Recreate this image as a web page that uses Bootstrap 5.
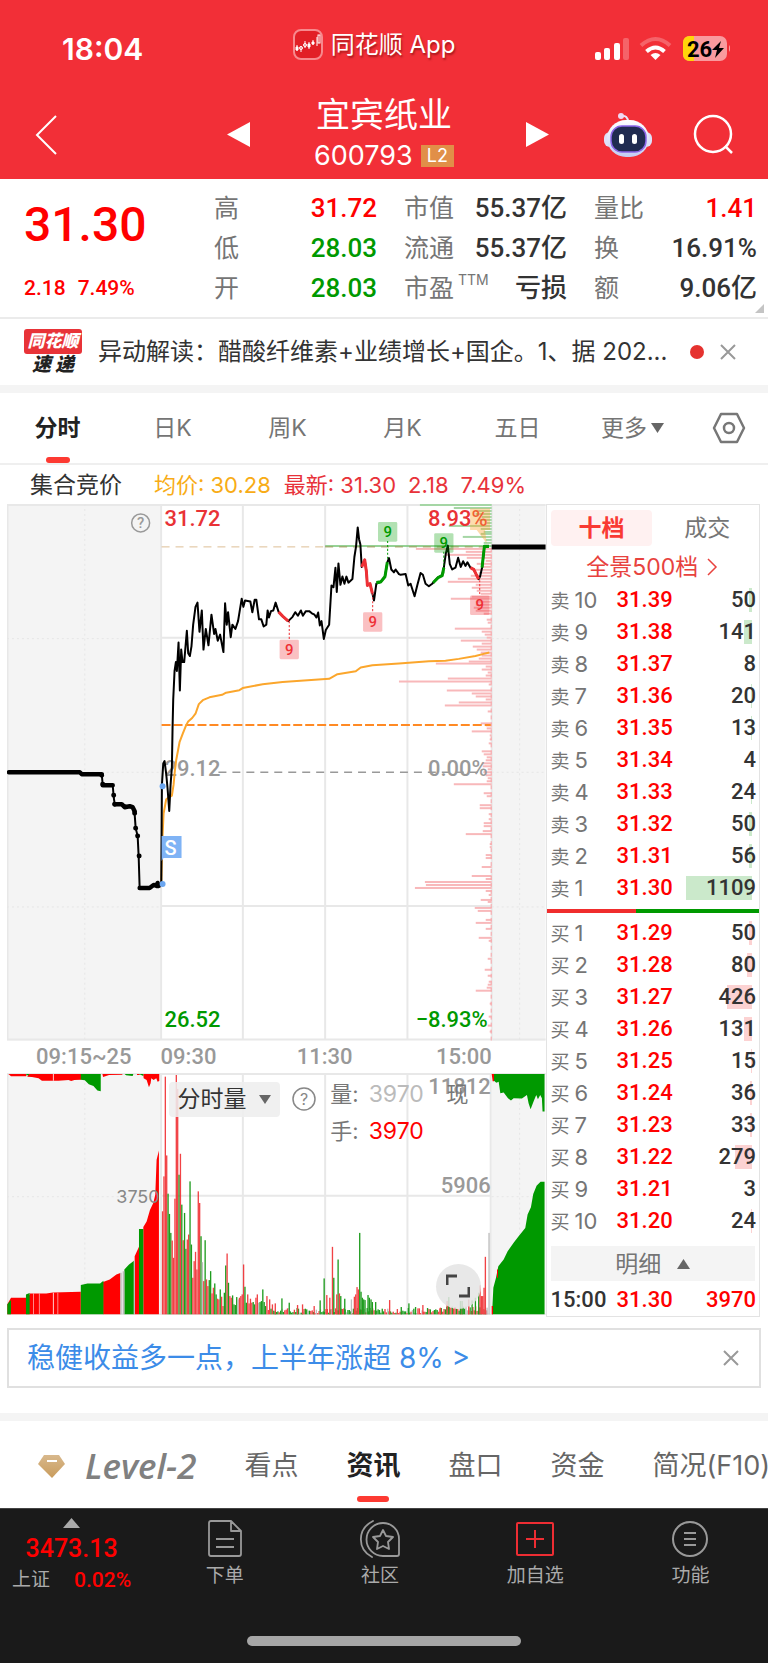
<!DOCTYPE html>
<html lang="zh-CN">
<head>
<meta charset="utf-8">
<meta name="viewport" content="width=device-width, initial-scale=1">
<title>宜宾纸业 600793</title>
<link href="https://cdn.jsdelivr.net/npm/bootstrap@5.3.0/dist/css/bootstrap.min.css" rel="stylesheet">
<style>
  :root { --rise: #ff0000; --fall: #009900; --brand: #f22f37; --line: #ebebeb; --muted: #757575; }
  body { font-family: Inter, "Noto Sans CJK SC", sans-serif; font-size: 24px; line-height: 32px; color: #333; background: #fff; overflow-x: hidden; }
  button { font: inherit; color: inherit; background: none; border: 0; padding: 0; }
  a { color: inherit; text-decoration: none; }
  svg { display: block; flex: none; }
  .din { font-family: Roboto, "Noto Sans CJK SC", sans-serif; font-weight: 500; }
  .rise { color: var(--rise); }
  .fall { color: var(--fall); }
  .muted { color: var(--muted); }

  .top-area { background: var(--brand); color: #fff; }
  .thirds { display: grid; grid-template-columns: 1fr auto 1fr; align-items: center; }
  .status-row { height: 86px; padding: 12px 38px 0 18px; }
  .clock { font-size: 30px; font-weight: 600; line-height: 40px; padding-left: 44px; }
  .app-name { text-shadow: 1px 2px 2px rgba(90, 0, 0, .5); }
  .title-row { height: 93px; padding: 4px 34px 0; }
  .stock-name { font-size: 34px; line-height: 42px; font-weight: 400; }
  .stock-code { font-size: 27px; line-height: 40px; }
  .l2-tag { background: #e18f48; font-size: 18px; line-height: 22px; padding: 0 6px; }

  .quote { display: grid; grid-template-columns: repeat(4, 1fr); column-gap: 27px; padding: 9px 11px 9px 24px; border-bottom: 2px solid var(--line); }
  .price-now { font-size: 48px; line-height: 74px; }
  .price-diff { font-size: 21px; line-height: 28px; margin-top: 12px; }
  .quote dl > div { height: 40px; }
  .quote dt { font-size: 25px; }
  .quote dd { font-size: 26px; }
  .ttm { font-size: 14px; top: -12px; }
  .corner { right: 4px; bottom: 4px; }

  .news { height: 66px; padding: 0 32px 0 24px; }
  .band { height: 8px; background: #f4f4f4; }
  .express { width: 58px; font-style: italic; font-weight: 900; font-size: 19px; line-height: 22px; text-align: center; color: #222; }
  .express b { display: block; background: #e83338; color: #fff; font-size: 17px; line-height: 25px; border-radius: 3px; }
  .dot { width: 14px; height: 14px; background: #e5322f; }

  .periods { height: 72px; border-bottom: 2px solid #efefef; font-size: 23px; color: var(--muted); }
  .periods a { flex: 115 1 0; text-align: center; }
  .periods .gear { flex: 78 1 0; }
  .periods .active, .sections .active { color: #222; font-weight: 600; }
  .active::after { content: ""; position: absolute; left: 50%; bottom: 0; width: 24px; height: 6px; margin-left: -12px; border-radius: 3px; background: #fd3a32; }
  .avg-row { height: 39px; padding-left: 30px; font-size: 22px; }
  .avg-row .auction { font-size: 23px; margin-right: 32px; }
  .avg-row .latest { gap: 12px; margin-left: 13px; color: #e8323a; }
  .avg-row .average { color: #f8ac16; }

  .trade { margin: 0 8px 0 7px; }
  .charts { flex: 540 1 0; min-width: 0; }
  .book { flex: 213 1 0; min-width: 0; border: 1px solid #e3e3e3; }
  .charts svg.plot { width: 100%; height: auto; }
  .plot text { font-family: Roboto, sans-serif; font-weight: 500; font-size: 22px; }
  .times { display: grid; grid-template-columns: 154fr 82fr 165fr 85fr 54fr; height: 32px; font-size: 22px; line-height: 32px; color: #999; font-family: Roboto, sans-serif; font-weight: 500; white-space: nowrap; }
  .vol-type { left: 30%; top: 9px; background: rgba(238, 238, 238, .88); border-radius: 4px; height: 35px; padding: 0 9px; gap: 12px; font-size: 23px; }
  .vol-help { left: 53%; top: 14px; }
  .vol-now { left: 60%; top: 3px; width: 155px; font-size: 22px; line-height: 37px; color: #777; }
  .vol-now .past { color: #bbb; margin-right: 4px; }
  .vol-now .past, .vol-now .rise { font-size: 23px; margin-left: 4px; }
  .expand { right: 65px; bottom: 6px; width: 45px; height: 45px; border-radius: 50%; background: rgba(228, 228, 228, .86); }

  .book-tabs { padding: 5px 5px 5px 4px; }
  .book-tabs button { height: 36px; color: var(--muted); font-size: 23px; width: 50%; }
  .book-tabs .on { background: #fff1f1; color: #f93a33; font-weight: 700; border-radius: 4px; }
  .depth-link { color: #e8423e; font-size: 23px; line-height: 32px; margin-bottom: 1px; }
  .orders { width: 100%; table-layout: fixed; font-size: 22px; line-height: 24px; }
  .orders td, .orders th { padding: 0; font-weight: 400; height: 32px; white-space: nowrap; vertical-align: middle; }
  .orders th { width: 70px; padding-left: 4px; color: var(--muted); }
  .orders th span { font-size: 19px; line-height: 20px; margin-right: 5px; }
  .orders .din { font-weight: 500; }
  .orders .qty { position: relative; text-align: right; padding-right: 3px; }
  .qty i { position: absolute; right: 7px; top: 4px; height: 24px; }
  .qty span { position: relative; }
  .sell i { background: #cbe9cb; }
  .buy i { background: #fcd2d2; }
  .ratio { height: 4px; margin: 5px 0 4px; background: var(--fall); }
  .ratio div { height: 4px; background: #f02d2d; }
  .detail-row { padding: 9px 4px 3px; }
  .detail { background: #f4f4f4; height: 35px; font-size: 23px; color: var(--muted); }
  .last-deal { display: grid; grid-template-columns: 66px auto 1fr; font-size: 22px; line-height: 32px; padding: 0 3px 0 4px; }

  .promo { margin: 11px 7px 25px; height: 60px; border: 2px solid #e0e0e0; padding: 0 20px 0 18px; }
  .promo a { font-size: 28px; color: #3c8ce8; }
  .sections { height: 87px; padding: 2px 0 0 38px; gap: 48px; font-size: 27px; color: #666; overflow: hidden; white-space: nowrap; }
  .sections .active::after { width: 32px; margin-left: -16px; bottom: 6px; }
  .level { font-size: 35px; font-style: italic; font-weight: 600; color: #808080; font-family: "Open Sans", Inter, sans-serif; gap: 20px; }

  .dock { background: #1a1a1a; border-top: 1px solid #444; color: #aaa; font-size: 19px; line-height: 24px; min-height: 155px; }
  .dock-items { height: 100px; }
  .dock-items > * { flex: 155 1 0; text-align: center; }
  .dock-items .index { flex: 143 1 0; padding-right: 4px; }
  .index-val { font-size: 25px; line-height: 30px; }
  .index-pct { font-size: 21px; }
  .dock-items svg { margin: 11px auto 6px; }
  .dock-items .index svg { margin: 9px auto 6px; }
  .home-bar { width: 274px; height: 10px; border-radius: 5px; background: #a6a6a6; margin-top: 27px; }
</style>
</head>
<body>

<header class="top-area">
  <div class="status-row thirds">
    <div class="clock">18:04</div>
    <div class="d-flex align-items-center gap-2 mb-2 app-name">
      <svg width="30" height="32" viewBox="0 0 30 32"><rect x="1" y="1" width="28" height="29" rx="7" fill="#e21f26" stroke="#f7898d" stroke-width="2"/><g stroke="#fff" stroke-width="1" fill="none"><path d="M4 16v6M8 17v6M12 12v7M16 13v7M20 11v5M24 8v9"/><path fill="#fff" d="M3 18h2v3H3zM15 15h2v3h-2zM19 13h2v2h-2z"/><circle cx="8" cy="19" r="1.5"/><circle cx="12" cy="16" r="1.5"/><rect x="25" y="6" width="2" height="8"/></g></svg>
      <span>同花顺 App</span>
    </div>
    <div class="d-flex align-items-center justify-content-end">
      <svg width="137" height="28" viewBox="593 35 137 28">
        <g fill="#fff"><rect x="595" y="52" width="6" height="8" rx="2"/><rect x="604" y="48" width="6" height="12" rx="2"/><rect x="614" y="43" width="6" height="17" rx="2"/><rect x="623" y="38" width="6" height="22" rx="2" opacity=".25"/>
        <path d="M655.500 60l-5-5q5-4 10 0z"/></g>
        <path d="M646.500 51.500q9-8 18 0" fill="none" stroke="#fff" stroke-width="4"/>
        <path d="M641 45.500q14.500-13 29 0" fill="none" stroke="#fff" stroke-width="4" opacity=".25"/>
        <rect x="683" y="36" width="44" height="25" rx="7" fill="#f99a9e"/><path d="M690 36h4v25h-4q-7 0-7-7V43q0-7 7-7z" fill="#ffd60a"/><path d="M729 45q3 3 0 7z" fill="#f99a9e"/>
        <text x="687" y="57" font-size="22" font-weight="700" font-family="Roboto" fill="#000">26</text><path d="M721 41l-9 9h5l-2 8 9-10h-5z" fill="#000"/>
      </svg>
    </div>
  </div>
  <div class="title-row thirds">
    <div class="d-flex justify-content-between align-items-center pe-5">
      <button type="button" aria-label="返回"><svg width="24" height="42" viewBox="0 0 24 42"><path d="M22 2L3 21l19 19" fill="none" stroke="#fff" stroke-width="2"/></svg></button>
      <button type="button" aria-label="上一只" class="me-3"><svg width="23" height="25"><path d="M0 12.500L23 0v25z" fill="#fff"/></svg></button>
    </div>
    <div class="text-center">
      <h1 class="stock-name m-0">宜宾纸业</h1>
      <div class="stock-code d-flex align-items-center gap-2">600793 <span class="l2-tag">L2</span></div>
    </div>
    <div class="d-flex justify-content-between align-items-center ps-5">
      <button type="button" aria-label="下一只" class="ms-4"><svg width="23" height="25"><path d="M23 12.500L0 0v25z" fill="#fff"/></svg></button>
      <div class="d-flex align-items-center gap-4">
        <button type="button" aria-label="智能助手" class="me-3"><svg width="50" height="46" viewBox="0 0 50 46"><defs><linearGradient id="shell" x2="0" y2="1"><stop stop-color="#fff"/><stop offset="1" stop-color="#c3cdf3"/></linearGradient></defs><path d="M18 4q7-1 7 6" fill="none" stroke="#e8e8fb" stroke-width="2"/><circle cx="18" cy="4" r="3" fill="#f0d8f2"/><rect x="1" y="20" width="48" height="15" rx="6" fill="#dfe0f8"/><rect x="4" y="8" width="42" height="37" rx="19" fill="url(#shell)"/><rect x="8" y="14" width="35" height="26" rx="11" fill="#202b50" stroke="#8b66e8" stroke-width="1.500"/><rect x="16" y="22" width="5" height="10" rx="2.500" fill="#fff"/><rect x="29" y="22" width="5" height="10" rx="2.500" fill="#fff"/></svg></button>
        <button type="button" aria-label="搜索"><svg width="41" height="41" viewBox="0 0 41 41"><g fill="none" stroke="#fff" stroke-width="2.500"><circle cx="20" cy="20" r="18"/><path d="M32 32l7 7"/></g></svg></button>
      </div>
    </div>
  </div>
</header>

<main>
  <section class="quote position-relative">
    <div>
      <div class="price-now din rise">31.30</div>
      <div class="price-diff din rise d-flex gap-2"><span>2.18</span><span class="ms-1">7.49%</span></div>
    </div>
    <dl class="m-0">
      <div class="d-flex justify-content-between align-items-center"><dt class="fw-normal muted">高</dt><dd class="din rise m-0">31.72</dd></div>
      <div class="d-flex justify-content-between align-items-center"><dt class="fw-normal muted">低</dt><dd class="din fall m-0">28.03</dd></div>
      <div class="d-flex justify-content-between align-items-center"><dt class="fw-normal muted">开</dt><dd class="din fall m-0">28.03</dd></div>
    </dl>
    <dl class="m-0">
      <div class="d-flex justify-content-between align-items-center"><dt class="fw-normal muted">市值</dt><dd class="din m-0">55.37亿</dd></div>
      <div class="d-flex justify-content-between align-items-center"><dt class="fw-normal muted">流通</dt><dd class="din m-0">55.37亿</dd></div>
      <div class="d-flex justify-content-between align-items-center"><dt class="fw-normal muted text-nowrap">市盈<sup class="ttm ms-1">TTM</sup></dt><dd class="din m-0">亏损</dd></div>
    </dl>
    <dl class="m-0">
      <div class="d-flex justify-content-between align-items-center"><dt class="fw-normal muted">量比</dt><dd class="din rise m-0">1.41</dd></div>
      <div class="d-flex justify-content-between align-items-center"><dt class="fw-normal muted">换</dt><dd class="din m-0">16.91%</dd></div>
      <div class="d-flex justify-content-between align-items-center"><dt class="fw-normal muted">额</dt><dd class="din m-0">9.06亿</dd></div>
    </dl>
    <svg class="corner position-absolute" width="9" height="9"><path d="M9 0v9H0z" fill="#c4c4c4"/></svg>
  </section>

  <section class="news d-flex align-items-center">
    <div class="express flex-shrink-0"><b>同花顺</b>速 递</div>
    <a href="#news" class="flex-grow-1 text-nowrap ms-3">异动解读：醋酸纤维素+业绩增长+国企。1、据 202...</a>
    <span class="dot rounded-circle flex-shrink-0"></span>
    <button type="button" aria-label="关闭" class="ms-3"><svg width="16" height="16"><path d="M1 1l14 14M15 1L1 15" stroke="#999" stroke-width="2"/></svg></button>
  </section>
  <div class="band"></div>

  <nav class="periods d-flex align-items-stretch">
    <a href="#p1" class="active position-relative d-flex align-items-center justify-content-center">分时</a>
    <a href="#p2" class="d-flex align-items-center justify-content-center">日K</a>
    <a href="#p3" class="d-flex align-items-center justify-content-center">周K</a>
    <a href="#p4" class="d-flex align-items-center justify-content-center">月K</a>
    <a href="#p5" class="d-flex align-items-center justify-content-center">五日</a>
    <a href="#p6" class="d-flex align-items-center justify-content-center gap-1">更多 <svg width="13" height="10"><path d="M0 0h13L6.500 10z" fill="#666"/></svg></a>
    <button type="button" class="gear d-flex align-items-center justify-content-center" aria-label="设置"><svg width="34" height="32" viewBox="0 0 34 32"><g fill="none" stroke="#777" stroke-width="2.500"><path d="M9 2h16l7 14-7 14H9L2 16z" stroke-linejoin="round"/><circle cx="17" cy="16" r="5"/></g></svg></button>
  </nav>

  <div class="avg-row d-flex align-items-center">
    <span class="auction">集合竞价</span>
    <span class="average">均价: 30.28</span>
    <span class="latest d-flex"><span>最新: 31.30</span><span>2.18</span><span>7.49%</span></span>
  </div>

  <section class="trade d-flex">
    <div class="charts">
      <svg class="plot" viewBox="7 504 540 538" role="img" aria-label="分时走势">
        <path fill="#f4f4f4" d="M7 504h154v538H7zM493 504h54v538h-54z"/>
        <path stroke="#e8e8e8" stroke-width="2" fill="none" d="M7 505h540M7 1041h540M161 638h332M161 907h332M161.500 504v538M243.500 504v538M326 504v538M408.500 504v538M493 504v538M7.500 504v538"/>
        <path stroke="#e6e6e6" stroke-dasharray="2 3" fill="none" d="M85 504v538M521 504v538M7 639h154M7 908h154M493 639h54M493 908h54M7 773h154M493 773h54"/>
        <circle cx="141" cy="523" r="9" fill="none" stroke="#999" stroke-width="1.500"/><text x="141" y="528" text-anchor="middle" fill="#999" style="font-size:15px">?</text>
        <path stroke="#ddbf95" stroke-dasharray="8 6" d="M162 547h164"/>
        <path stroke="#999" stroke-width="1.500" stroke-dasharray="8 6" d="M219 773h268"/>
        <g id="profile"></g>
        <g fill="#e93236"><text x="165" y="526">31.72</text><text x="489" y="526" text-anchor="end">8.93%</text></g>
        <g fill="#999"><text x="165" y="777">29.12</text><text x="489" y="777" text-anchor="end">0.00%</text></g>
        <g fill="#009900"><text x="165" y="1028">26.52</text><text x="489" y="1028" text-anchor="end">−8.93%</text></g>
        <path stroke="#ff8a24" stroke-width="2" stroke-dasharray="9 3" d="M162 725.500h330"/>
        <path stroke="#7cc77c" stroke-width="2" opacity=".8" d="M326 546h167"/>
        <path stroke="#9d9b58" stroke-dasharray="8 6" d="M326 547h167"/>
        <g fill="none" stroke="#000" stroke-linejoin="round">
          <path stroke-width="4.500" stroke-linecap="round" d="M9 773h71l2 2h20M103 786h10M115 805h7l3 3 5-1 3 1 2 4M140 889h10l4-3 3 1 1-3 1 3"/>
          <path stroke-width="2" d="M80 773l2 2h20l1 11h10l1 12 1 7 10 1 8 3 2 6 1 14 2 8 1 20 1 32"/>
          <path stroke-width="5" stroke-linecap="round" d="M102 776v0M103 785v0M114 796v0M115 805v0M135 814v0M136 829v0M138 837v0M139.500 857v0"/>
          <path stroke-width="5" d="M493 547h54"/>
        </g>
        <path stroke="#8cbbf4" stroke-dasharray="2 2" d="M162 859v25"/>
        <g transform="translate(0 500) scale(.33333 .35714)">
          <g fill="none" stroke-linejoin="round">
            <polyline vector-effect="non-scaling-stroke" stroke="#fba62c" stroke-width="2" points="485,1080 488,960 492,880 500,840 508,835 517,830 522,800 526,760 530,730 540,680 550,655 560,632 566,622 578,612 588,600 598,573 610,562 630,554 668,547 680,541 720,534 730,528 790,517 850,511 990,502 1015,489 1070,481 1085,470 1120,464 1200,459 1290,453 1340,451 1380,446 1430,438 1455,432 1472,428"/>
            <polyline vector-effect="non-scaling-stroke" stroke="#000" stroke-width="2" points="485,1080 487,800 491,740 495,733 500,770 504,810 509,873 513,800 517,750 519,640 521,560 525,480 529,455 532,480 537,400 541,535 545,420 549,455 554,455 562,367 566,430 571,438 576,410 581,350 588,300 594,288 600,370 607,310 612,420 619,362 627,408 636,322 644,376 648,362 655,395 662,378 672,427 677,290 682,350 686,315 694,385 699,350 708,362 716,340 727,277 732,300 737,282 753,285 759,315 766,280 771,280 779,335 786,335 793,355 801,350 805,310 809,330 815,312 822,310 829,288 838,314 850,326 867,340 880,328 888,315 896,325 905,310 911,325 920,312 930,312 938,318 946,322 952,330 957,316 962,352 967,340 974,390 980,365 990,350 997,240 1003,245 1009,190 1013,258 1018,178 1024,238 1030,215 1036,235 1042,215 1048,232 1060,222 1066,160 1071,130 1076,77 1080,110 1084,125 1088,188 1097,168 1102,200 1105,240 1113,235 1120,262 1125,282 1132,235 1145,230 1158,215 1165,175 1170,163 1177,195 1185,203 1190,195 1200,208 1205,210 1220,208 1228,240 1235,235 1247,270 1255,240 1265,205 1272,210 1280,235 1290,242 1300,235 1318,217 1330,212 1335,190 1341,150 1347,128 1353,180 1360,195 1370,190 1378,162 1386,188 1393,172 1400,185 1406,175 1415,190 1425,195 1432,208 1440,222 1444,215 1450,190 1457,130 1470,130"/>
            <g stroke-width="9" stroke="#ee3035"><path d="M838 314l12 12 17 14M1088 188l9-20 5 32 3 40 8-5 7 27M1415 190l10 5 7 13 8 14"/></g>
            <g stroke-width="9" stroke="#009a00"><path d="M1132 232l13-2 13-15 7-40M1303 232l15-14 12-6 5-22M1450 190l7-60h14"/></g>
          </g>
          <g id="flags"></g>
          <g fill="#f9a531" opacity=".4"><path d="M1414 24h60v60h-15l5 38-30-38h-20z"/></g>
        </g>
        <path fill="#7fb3f5" d="M162 837h20v22h-18l-2 3z"/><text x="165" y="856" fill="#fff" style="font-size:20px">S</text>
        <circle cx="163" cy="787" r="3" fill="#6ba6f0"/><circle cx="163" cy="885" r="3" fill="#6ba6f0"/>
      </svg>

      <div class="times"><span class="text-center">09:15~25</span><span>09:30</span><span class="text-center">11:30</span><span class="text-end">15:00</span></div>

      <div class="position-relative">
        <svg class="plot" viewBox="7 1073 540 243" role="img" aria-label="分时量">
          <path fill="#f4f4f4" d="M7 1073h154v243H7zM493 1073h54v243h-54z"/>
          <path stroke="#e8e8e8" stroke-width="2" fill="none" d="M7 1074h540M7 1315h540M161 1196h332M161.500 1073v243M243.500 1073v243M326 1073v243M408.500 1073v243M492 1073v243M7.500 1073v243"/>
          <path stroke="#e6e6e6" stroke-dasharray="2 3" d="M85 1073v243M521 1073v243M7 1197h154M493 1197h54"/>
          <g transform="translate(0 1040) scale(.33333)">
            <g fill="#f00">
              <path d="M25 102h54v7H33zM86 102h158v17l-20 1-10 3-8-3-30 2h-50l-10-7-20-4-14-1zM308 102h60v2l-40 1-18 6zM412 102h8v3h-8zM431 102h48v21l-5 2-4-10-8 5-7-5-2 15-5 12-7-22-9-5z"/>
              <path d="M22 825V795l11-20h45l1-5 10-3v58zM89 825v-63h50l20-3 84-2v68zM310 825v-97l20-8 20-15 12-4v124zM405 825V650l13-28v203zM431 825V562l10-16 10-35 10-21 6-25 4-105 7-28v493z"/>
            </g>
            <g fill="#009900">
              <path d="M79 102h8v4h-8zM243 102h60v52l-10-2-12-14-14-5-12-12-12-2zM375 102h26l-2 6-20-2zM418 102h13v6zM22 825V795l11-13v43zM78 825v-60l11-4v64zM243 825v-88l20-5h38l10-8v101zM374 825V690l14-15 15-11v161zM418 825V568h13v257z"/>
              <path d="M1480 102H1638V215H1632L1630 175 1625 165 1618 178 1613 165 1605 185 1596 208 1590 190 1585 165 1570 176 1545 175 1537 182 1528 175 1515 158 1505 160 1500 125 1493 128 1486 122z"/>
              <path d="M1480 825l4-80 8-30 7-35 16-20 12-25 18-25 15-20 20-25 7-40 10-22 7-40 10-25 12-12h12v399z"/>
            </g>
            <g fill="#f00"><path d="M1479 102h7v22h-4zM1479 800h4v25h-4zM1495 690h3v25h-3z"/></g>
            <g fill="#fff" opacity=".8"><path d="M100 762h2v63h-2zM117 762h2v63h-2zM159 102h3v20h-3zM159 760h3v65h-3zM173 760h2v65h-2z"/></g>
            <g fill="#bbb"><path d="M362 700h4v125h-4zM369 695h5v130h-5zM402 664h4v161h-4z"/></g>
            <g id="volume" opacity=".88"></g>
          </g>
          <text x="160" y="1203" text-anchor="end" fill="#888" style="font:18px Inter">3750</text>
          <g fill="#999"><text x="492" y="1094" text-anchor="end">11812</text><text x="492" y="1193" text-anchor="end">5906</text></g>
        </svg>
        <button type="button" class="vol-type position-absolute d-flex align-items-center">分时量 <svg width="12" height="9"><path d="M0 0h12L6 9z" fill="#666"/></svg></button>
        <svg class="vol-help position-absolute" width="24" height="24"><circle cx="12" cy="12" r="11" fill="none" stroke="#888" stroke-width="1.500"/><text x="12" y="18" font-size="16" text-anchor="middle" fill="#888">?</text></svg>
        <div class="vol-now position-absolute">量: <span class="past">3970</span> &nbsp; 现<br>手: <span class="rise">3970</span></div>
        <button type="button" class="expand position-absolute" aria-label="展开"><svg class="mx-auto" width="24" height="24" viewBox="0 0 24 24"><path d="M1 11V2h10M13 22h10v-9" fill="none" stroke="#444" stroke-width="3"/></svg></button>
      </div>
    </div>

    <div class="book">
      <div class="book-tabs d-flex"><button type="button" class="on">十档</button><button type="button" class="ps-2">成交</button></div>
      <a href="#depth" class="depth-link d-flex justify-content-center align-items-center gap-2">全景500档 <svg width="13" height="18"><path d="M2 1l8 8-8 8" fill="none" stroke="#e8423e" stroke-width="1.500"/></svg></a>
      <table class="orders sell" id="sell"></table>
      <div class="ratio"><div style="width:42%"></div></div>
      <table class="orders buy" id="buy"></table>
      <div class="detail-row"><button type="button" class="detail d-flex align-items-center justify-content-center gap-3 w-100">明细 <svg width="13" height="10"><path d="M0 10h13L6.500 0z" fill="#666"/></svg></button></div>
      <div class="last-deal din"><span>15:00</span><span class="rise">31.30</span><span class="rise text-end">3970</span></div>
    </div>
  </section>

  <aside class="promo d-flex align-items-center justify-content-between">
    <a href="#promo">稳健收益多一点，上半年涨超 8% &gt;</a>
    <button type="button" aria-label="关闭"><svg width="16" height="16"><path d="M1 1l14 14M15 1L1 15" stroke="#999" stroke-width="2"/></svg></button>
  </aside>
  <div class="band"></div>

  <nav class="sections d-flex align-items-stretch">
    <a href="#level2" class="level d-flex align-items-center"><svg width="27" height="24"><defs><linearGradient id="gold" x2="0" y2="1"><stop stop-color="#d8b88c"/><stop offset="1" stop-color="#c99c5c"/></linearGradient></defs><path d="M6 1h15l6 9-13 14L0 10z" fill="url(#gold)"/><path d="M9 7h10" stroke="#fff" stroke-width="2"/></svg>Level-2</a>
    <a href="#s1" class="d-flex align-items-center">看点</a>
    <a href="#s2" class="active position-relative d-flex align-items-center">资讯</a>
    <a href="#s3" class="d-flex align-items-center">盘口</a>
    <a href="#s4" class="d-flex align-items-center">资金</a>
    <a href="#s5" class="d-flex align-items-center">简况(F10)</a>
  </nav>
</main>

<footer class="dock">
  <div class="dock-items d-flex">
    <div class="index">
      <svg width="17" height="10"><path d="M0 10h17L8.500 0z" fill="#aaa"/></svg>
      <div class="index-val din rise">3473.13</div>
      <div class="d-flex justify-content-center gap-4 mt-1"><span>上证</span><span class="index-pct din rise">0.02%</span></div>
    </div>
    <a href="#order"><svg width="36" height="38" viewBox="0 0 36 38"><g fill="none" stroke="#999" stroke-width="1.800" stroke-linejoin="round"><path d="M4 1h20l10 10v23q0 2-2 2H4q-2 0-2-2V3q0-2 2-2zM24 1v10h10M9 19h18M9 27h18"/></g></svg>下单</a>
    <a href="#club"><svg width="42" height="38" viewBox="0 0 42 38"><g fill="none" stroke="#999" stroke-width="1.800" stroke-linejoin="round" stroke-linecap="round"><path d="M14 1C-2 9-2 29 13 37"/><path d="M24 3a16.500 16.500 0 1 0 0 33h14q2 0 2-2V19A16 16 0 0 0 24 3z"/><path d="M24 10l3 6 7 1-5 5 1 7-6-3-6 3 1-7-5-5 7-1z"/></g></svg>社区</a>
    <a href="#add"><svg width="38" height="38" viewBox="0 0 38 38"><g fill="none" stroke="#ee2d33" stroke-width="2"><rect x="1" y="3" width="36" height="32" rx="1"/><path d="M19 10v18M10 19h18"/></g></svg>加自选</a>
    <a href="#more"><svg width="38" height="38" viewBox="0 0 38 38"><g fill="none" stroke="#999" stroke-width="2"><circle cx="19" cy="19" r="17"/><path d="M13 13h12M13 19h12M13 25h12"/></g></svg>功能</a>
  </div>
  <div class="home-bar mx-auto"></div>
</footer>

<script src="https://cdn.jsdelivr.net/npm/bootstrap@5.3.0/dist/js/bootstrap.bundle.min.js"></script>
<script>
  // Order book rows
  const fill = (id, label, levels, top, qty) => {
    document.getElementById(id).innerHTML = '<tbody>' + qty.map((q, i) =>
      `<tr><th scope="row"><span>${label}</span>${levels[i]}</th><td class="din rise">${((top - i) / 100).toFixed(2)}</td>` +
      `<td class="din qty"><i style="width:${Math.round(q * 66 / 1109)}px"></i><span>${q}</span></td></tr>`).join('') + '</tbody>';
  };
  const up = [1, 2, 3, 4, 5, 6, 7, 8, 9, 10];
  fill('sell', '卖', [...up].reverse(), 3139, [50, 141, 8, 20, 13, 4, 24, 50, 56, 1109]);
  fill('buy', '买', up, 3129, [50, 80, 426, 131, 15, 36, 33, 279, 3, 24]);

  // Turnover at each price: [y, left edge]
  const sold = [[505,421],[508,455],[511,477],[514,477],[517,483],[520,480],[523,488],[526,450],[529,482],[532,485],[534,482],[537,464],[540,487],[543,485]];
  const bought = [[549,417],[552,467],[555,447],[558,468],[561,487],[564,478],[567,483],[570,475],[573,480],[576,472],[579,459],[582,449],[585,477],[588,473],[591,478],[594,482],[597,473],[599,452],[602,477],[605,477],[608,475],[611,477],[614,485],[620,488],[623,489],[629,456],[632,483],[635,486],[638,488],[641,462],[644,483],[647,474],[650,478],[653,482],[656,483],[659,480],[662,470],[664,437],[667,487],[670,483],[673,489],[676,487],[679,449],[682,400],[685,490],[691,448],[694,473],[697,477],[700,487],[703,460],[706,446],[712,489],[724,482],[726,487],[729,488],[732,473],[736,491],[740,491],[744,490],[752,483],[755,485],[758,488],[761,487],[764,483],[767,484],[770,489],[773,485],[776,487],[779,489],[782,488],[785,455],[794,485],[797,488],[806,481],[809,481],[815,490],[820,490],[824,485],[827,485],[832,484],[835,467],[845,491],[848,491],[856,487],[859,487],[868,483],[877,473],[880,487],[883,426],[886,427],[889,416],[892,487],[896,490],[901,482],[903,489],[909,476],[912,479],[921,487],[924,477],[930,487],[939,480],[942,490],[960,489],[971,486],[977,489],[983,490],[986,489],[989,488],[992,477],[1005,491],[1018,490],[1027,489],[1033,491]];
  const bars = (list, color) => list.map(([y, x]) => `<rect x="${x}" y="${y - 1}" width="${493 - x}" height="2" fill="${color}"/>`).join('');
  document.getElementById('profile').innerHTML = bars(sold, '#a5d6a5') + bars(bought, '#f8b8ba') +
    '<path d="M492.500 548v494" stroke="#f8a5a8" stroke-dasharray="4 3"/>';

  // Nine-turn flags: [x, top of flag, line start, line end, colour]
  document.getElementById('flags').innerHTML = [[1166,62,115,170,'#009a00'],[1335,93,145,210,'#009a00'],[1121,315,262,315,'#ee3035'],[870,392,340,392,'#ee3035'],[1443,268,225,268,'#ee3035']]
    .map(([x, y, a, b, c]) => `<path d="M${x} ${a}V${b}" stroke="${c}" stroke-width="3" stroke-dasharray="6 5"/><rect x="${x - 29}" y="${y}" width="58" height="55" rx="4" fill="${c}" opacity=".3"/>` +
      `<g transform="translate(${x} ${y + 42}) scale(3 2.8)"><text text-anchor="middle" fill="${c}" style="font-size:15px">9</text></g>`).join('');

  // Minute volume: 'colour + top' for the opening stretch, then peaks over a quiet base
  const open = 'r515 r410 r110 r347 g462 g523 g580 r603 r655 r477 r105 r147 g405 r342 g495 r602 g520 g628 r600 r585 g425 g615 r715 r665 r637 r690 r455 r490 g590 x668 r725 g602 r720 r740 g722 g695 r762 r745 g732 g765 r778 r780 g750 r772 r800 g760 g678 r642 g730 r770 r775 g768 g795 g797 g773 x780 r775 r770 r765 r675 g742 g790 r765 r792 r778 r790 g788 g795 r775 r765 x790 g788 g785 g750 g788 g800 r770 r812 r780 g808 r795'.split(' ');
  const peaks = 'r828:792 g848:777 g870:790 r895:797 r910:795 r945:800 g963:783 g975:717 r983:767 r992:775 r1000:622 g1004:715 g1017:660 r1013:765 r1021:762 g1025:770 g1037:778 x1057:780 r1066:772 r1070:765 r1074:743 r1078:750 g1082:580 g1086:757 g1090:775 g1094:780 g1098:782 g1107:767 g1111:775 g1116:780 g1120:788 g1130:788 r1172:782 g1207:803 g1230:792 g1250:803 r1272:797 r1325:805 g1350:773 r1345:785 g1385:785 g1390:785 r1410:780 g1420:783 g1430:775 g1440:760 r1444:738 r1448:770 r1452:770 r1456:745 r1460:652 x1465:805 x1471:580'.split(' ');
  const tone = { r: '#f0282c', g: '#008f00', x: '#b5b5b5' };
  const bar = (x, y, k) => `<rect x="${x}" y="${y}" width="4" height="${825 - y}" fill="${tone[k]}"/>`;
  let vol = '', seed = 7;
  open.forEach((s, i) => vol += bar(487 + i * 4.13, +s.slice(1), s[0]));
  for (let i = open.length; i < 237; i++) {
    seed = (seed * 73 + 41) % 1009;
    vol += bar(487 + i * 4.13, (i > 205 ? 800 : 806) + seed % 16, seed % 9 === 0 ? 'x' : seed % 2 ? 'r' : 'g');
  }
  peaks.forEach(s => { const [x, y] = s.slice(1).split(':'); vol += bar(+x - 2, +y, s[0]); });
  document.getElementById('volume').innerHTML = vol;
</script>
</body>
</html>
